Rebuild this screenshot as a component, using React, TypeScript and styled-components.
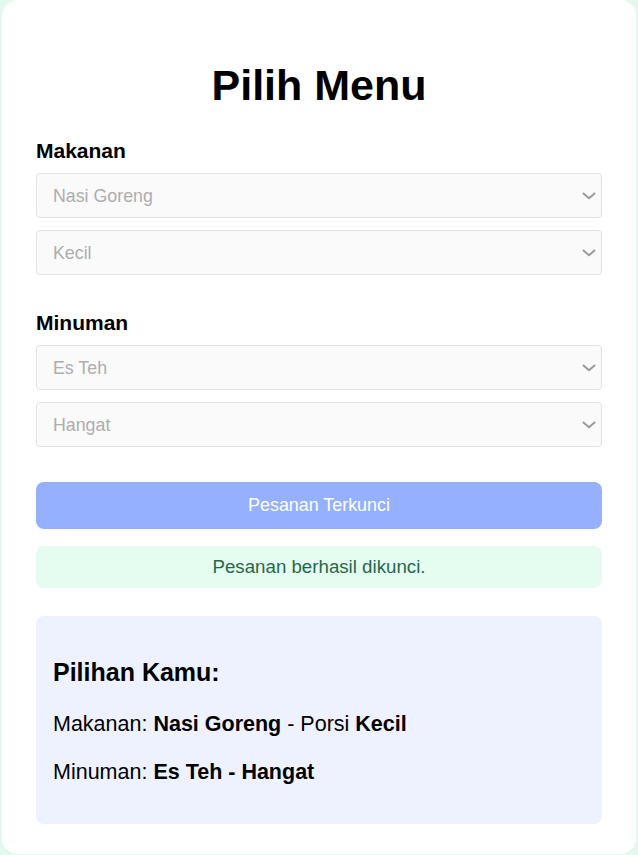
import styled, { createGlobalStyle } from "styled-components";

const GlobalStyle = createGlobalStyle`
    html, body {
        margin: 0;
        padding: 0;
        background: #e3f8ee;
        font-family: "Liberation Sans", Arial, sans-serif;
    }
    * {
        box-sizing: border-box;
    }
`

const Card = styled.div`
    margin: 0 2px;
    min-height: 853px;
    background: #fff;
    border-radius: 16px;
    padding: 34px 34px 30px;
    display: flex;
    flex-direction: column;
`

const Title = styled.h1`
    margin: 27px 0 0;
    font-size: 43px;
    line-height: 48px;
    font-weight: 700;
    text-align: center;
    color: #000;
`

const Section = styled.div<{ $top: number }>`
    display: flex;
    flex-direction: column;
    margin-top: ${p => p.$top}px;
`

const Label = styled.label`
    font-size: 21px;
    line-height: 24px;
    font-weight: 700;
    color: #000;
    margin-bottom: 10px;
`

const SelectList = styled.div`
    display: flex;
    flex-direction: column;
    gap: 12px;
`

const SelectWrap = styled.div`
    position: relative;
`

const Select = styled.select`
    appearance: none;
    width: 100%;
    height: 45px;
    padding: 0 36px 0 16px;
    font-family: "Liberation Sans", Arial, sans-serif;
    font-size: 17.8px;
    color: #adadad;
    background: #fafafa;
    border: 1px solid #e2e2e2;
    border-radius: 4px;
    opacity: 1;
`

const Chevron = styled.svg`
    position: absolute;
    right: 6px;
    top: 50%;
    transform: translateY(-50%);
    pointer-events: none;
`

const Button = styled.button`
    margin-top: 35px;
    height: 47px;
    width: 100%;
    border: none;
    border-radius: 8px;
    background: #94b0ff;
    color: #fff;
    font-family: "Liberation Sans", Arial, sans-serif;
    font-size: 17.9px;
`

const Message = styled.div`
    margin-top: 17px;
    height: 42px;
    border-radius: 8px;
    background: #e5fdf0;
    color: #276749;
    font-size: 18.7px;
    display: flex;
    align-items: center;
    justify-content: center;
`

const Result = styled.div`
    margin-top: 28px;
    background: #eef2ff;
    border-radius: 8px;
    padding: 17px;
    color: #000;
`

const ResultTitle = styled.h3`
    margin: 25px 0;
    font-size: 25px;
    line-height: 29px;
    font-weight: 700;
`

const ResultLine = styled.p`
    margin: 0 0 23px;
    font-size: 21.5px;
    line-height: 25px;

    &:last-child {
        margin-bottom: 22px;
    }
`

const menu = [
    { label: "Makanan", options: ["Nasi Goreng", "Kecil"], top: 30 },
    { label: "Minuman", options: ["Es Teh", "Hangat"], top: 36 },
]

export default function App() {
    return (
        <>
            <GlobalStyle />
            <Card>
                <Title>Pilih Menu</Title>
                {menu.map(m => (
                    <Section key={m.label} $top={m.top}>
                        <Label>{m.label}</Label>
                        <SelectList>
                            {m.options.map(o => (
                                <SelectWrap key={o}>
                                    <Select disabled defaultValue={o}>
                                        <option>{o}</option>
                                    </Select>
                                    <Chevron width="14" height="8" viewBox="0 0 14 8">
                                        <path d="M1.5 1.5 L7 6.2 L12.5 1.5" fill="none" stroke="#9a9a9a" strokeWidth="2" strokeLinecap="round" strokeLinejoin="round" />
                                    </Chevron>
                                </SelectWrap>
                            ))}
                        </SelectList>
                    </Section>
                ))}
                <Button disabled>Pesanan Terkunci</Button>
                <Message>Pesanan berhasil dikunci.</Message>
                <Result>
                    <ResultTitle>Pilihan Kamu:</ResultTitle>
                    <ResultLine>
                        Makanan: <b>Nasi Goreng</b> - Porsi <b>Kecil</b>
                    </ResultLine>
                    <ResultLine>
                        Minuman: <b>Es Teh - Hangat</b>
                    </ResultLine>
                </Result>
            </Card>
        </>
    )
}
